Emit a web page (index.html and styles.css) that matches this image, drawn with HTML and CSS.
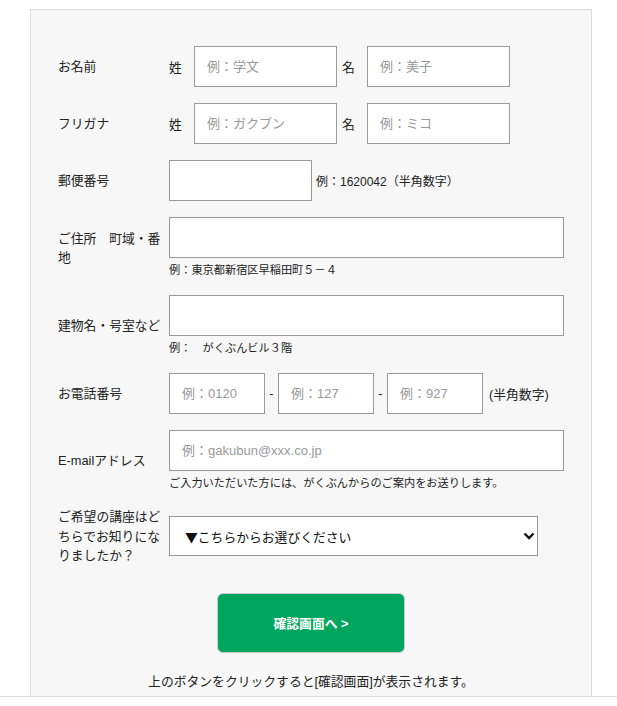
FILE: index.html
```html
<!DOCTYPE html>
<html lang="ja">
<head>
  <meta charset="UTF-8" />
  <meta name="viewport" content="width=device-width, initial-scale=1.0"/>
  <title>資料請求フォーム</title>
  <link rel="stylesheet" href="styles.css">
</head>
<body>
  <div class="page">
    <form class="form-box">

      <!-- お名前 -->
      <div class="form-row">
        <div class="form-label">お名前</div>
        <div class="form-field">
          <div class="inline-group">
            <span class="name-sub">姓</span>
            <input type="text" class="text-input input-name" placeholder="例：学文" />
            <span class="name-sub name-sub-second">名</span>
            <input type="text" class="text-input input-name" placeholder="例：美子" />
          </div>
        </div>
      </div>

      <!-- フリガナ -->
      <div class="form-row">
        <div class="form-label">フリガナ</div>
        <div class="form-field">
          <div class="inline-group">
            <span class="name-sub">姓</span>
            <input type="text" class="text-input input-name" placeholder="例：ガクブン" />
            <span class="name-sub name-sub-second">名</span>
            <input type="text" class="text-input input-name" placeholder="例：ミコ" />
          </div>
        </div>
      </div>

      <!-- 郵便番号 -->
      <div class="form-row">
        <div class="form-label">郵便番号</div>
        <div class="form-field">
          <div class="inline-group">
            <input type="text" class="text-input input-zip" />
            <span class="side-note">例：1620042（半角数字）</span>
          </div>
        </div>
      </div>

      <!-- ご住所 -->
      <div class="form-row">
        <div class="form-label">ご住所　町域・番地</div>
        <div class="form-field">
          <input type="text" class="text-input input-full" />
          <p class="field-note">例：東京都新宿区早稲田町５－４</p>
        </div>
      </div>

      <!-- 建物名 -->
      <div class="form-row">
        <div class="form-label">建物名・号室など</div>
        <div class="form-field">
          <input type="text" class="text-input input-full" />
          <p class="field-note">例：　がくぶんビル３階</p>
        </div>
      </div>

      <!-- お電話番号 -->
      <div class="form-row">
        <div class="form-label">お電話番号</div>
        <div class="form-field">
          <div class="inline-group">
            <input type="text" class="text-input input-tel" placeholder="例：0120" />
            <span class="tel-sep">-</span>
            <input type="text" class="text-input input-tel" placeholder="例：127" />
            <span class="tel-sep">-</span>
            <input type="text" class="text-input input-tel" placeholder="例：927" />
            <span class="tel-note">(半角数字)</span>
          </div>
        </div>
      </div>

      <!-- E-mail -->
      <div class="form-row">
        <div class="form-label">E-mailアドレス</div>
        <div class="form-field">
          <input type="text" class="text-input input-full" placeholder="例：gakubun@xxx.co.jp" />
          <p class="field-note">ご入力いただいた方には、がくぶんからのご案内をお送りします。</p>
        </div>
      </div>

      <!-- きっかけ -->
      <div class="form-row">
        <div class="form-label">ご希望の講座はどちらでお知りになりましたか？</div>
        <div class="form-field">
          <div class="select-wrap">
            <select class="select-input">
              <option>▼こちらからお選びください</option>
            </select>
            <svg class="select-arrow" width="12" height="8" viewBox="0 0 12 8">
              <path d="M1.5 1.5 L6 6 L10.5 1.5" fill="none" stroke="#111" stroke-width="2.4" />
            </svg>
          </div>
        </div>
      </div>

      <div class="submit-area">
        <button type="button" class="submit-btn">確認画面へ &gt;</button>
        <p class="submit-note">上のボタンをクリックすると[確認画面]が表示されます。</p>
      </div>
    </form>
  </div>
  <div class="page-line"></div>
</body>
</html>
```

FILE: styles.css
```css
body {
  font-family: 'Liberation Sans', 'Noto Sans CJK JP', sans-serif;
  background-color: #fff;
  color: #222;
  margin: 0;
  padding: 0;
}

.page {
  padding: 9px 25px 0 30px;
}

.form-box {
  background-color: #f7f7f7;
  border: 1px solid #ddd;
  border-bottom: none;
  padding: 36px 27px 5px 27px;
  margin: 0;
}

.form-row {
  display: flex;
  align-items: center;
  margin-bottom: 16px;
}

.form-label {
  width: 111px;
  flex-shrink: 0;
  padding-right: 6px;
  box-sizing: border-box;
  font-size: 12.8px;
  line-height: 1.5;
}

.form-field {
  flex: 1;
}

.inline-group {
  display: flex;
  align-items: center;
}

.name-sub {
  width: 25px;
  font-size: 12.8px;
}

.name-sub-second {
  margin-left: 5px;
}

.text-input {
  height: 41px;
  box-sizing: border-box;
  border: 1px solid #999;
  background-color: #fff;
  padding: 0 12px;
  font-family: inherit;
  font-size: 13px;
  color: #222;
  margin: 0;
  border-radius: 0;
}

.text-input::placeholder {
  color: #999;
}

.input-name {
  width: 143px;
}

.input-zip {
  width: 143px;
}

.input-full {
  width: 100%;
  display: block;
}

.input-tel {
  width: 96px;
}

.tel-sep {
  width: 13px;
  text-align: center;
  font-size: 12.8px;
}

.tel-note {
  margin-left: 6px;
  font-size: 12.8px;
}

.side-note {
  margin-left: 4px;
  font-size: 12px;
}

.field-note {
  margin: 4px 0 0 0;
  font-size: 11.2px;
  line-height: 1.5;
}

/* Select box with its own arrow */
.select-wrap {
  position: relative;
  width: 369px;
}

.select-input {
  width: 100%;
  height: 40px;
  box-sizing: border-box;
  border: 1px solid #999;
  border-radius: 0;
  background-color: #fff;
  padding: 0 30px 0 15px;
  font-family: 'Noto Sans CJK JP', sans-serif;
  font-size: 12.8px;
  color: #111;
  appearance: none;
  -webkit-appearance: none;
}

.select-arrow {
  position: absolute;
  right: 3px;
  top: 16px;
}

.submit-area {
  text-align: center;
  padding-top: 12px;
}

.submit-btn {
  display: block;
  width: 188px;
  height: 60px;
  margin: 0 auto;
  background-color: #00a65e;
  border: 1px solid #c9c9c9;
  border-radius: 6px;
  color: #fff;
  font-family: inherit;
  font-size: 12.8px;
  font-weight: 600;
  cursor: pointer;
}

.submit-note {
  margin: 19px 0 0 0;
  font-size: 12.8px;
  line-height: 1.5;
}

.page-line {
  border-top: 1px solid #ddd;
  height: 8px;
}
```
